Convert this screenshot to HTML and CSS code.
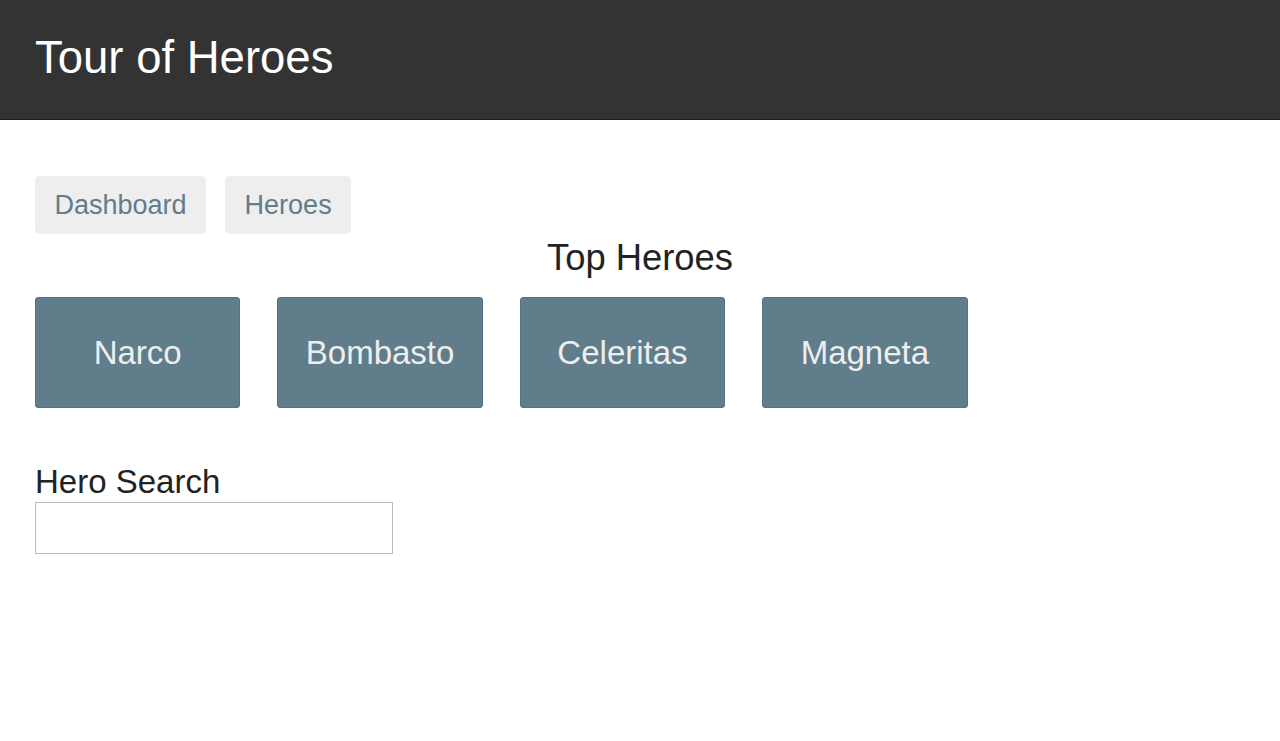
FILE: index.html
```html
<!DOCTYPE html>
<html lang="en">
<head>
<meta charset="utf-8">
<title>Tour of Heroes</title>
<link rel="stylesheet" href="styles.css">
</head>
<body>
<header class="app-header">
  <h1 class="app-title">Tour of Heroes</h1>
</header>
<main class="content">
  <nav class="nav">
    <a class="nav-link" href="#">Dashboard</a>
    <a class="nav-link" href="#">Heroes</a>
  </nav>
  <h2 class="section-title">Top Heroes</h2>
  <div class="hero-grid">
    <a class="hero-card" href="#">Narco</a>
    <a class="hero-card" href="#">Bombasto</a>
    <a class="hero-card" href="#">Celeritas</a>
    <a class="hero-card" href="#">Magneta</a>
  </div>
  <section class="search">
    <h4 class="search-title">Hero Search</h4>
    <input class="search-box" type="text">
  </section>
</main>
</body>
</html>
```
FILE: styles.css
```css
* { box-sizing: border-box; }
html, body {
  margin: 0;
  padding: 0;
  background: #fff;
  font-family: "Liberation Sans", Arial, Helvetica, sans-serif;
}
.app-header {
  height: 120px;
  background: #333333;
  border-bottom: 1px solid #1c1c1c;
  padding: 35px 35px 0;
}
.app-title {
  margin: 0;
  color: #ffffff;
  font-size: 45.5px;
  line-height: 45px;
  font-weight: normal;
}
.content {
  display: flex;
  flex-direction: column;
  padding: 56px 35px 0;
}
.nav {
  display: flex;
  gap: 19px;
}
.nav-link {
  display: block;
  background: #eeeeee;
  color: #607d8b;
  text-decoration: none;
  font-size: 27px;
  line-height: 28px;
  padding: 15px 19.5px;
  border-radius: 5px;
}
.section-title {
  margin: 6px 0 0;
  text-align: center;
  font-size: 36.4px;
  line-height: 36px;
  font-weight: normal;
  color: #222;
}
.hero-grid {
  display: flex;
  gap: 37px;
  margin-top: 21px;
}
.hero-card {
  width: 205.4px;
  height: 111px;
  display: flex;
  align-items: center;
  justify-content: center;
  background: #607d8b;
  border: 1px solid #567382;
  border-radius: 3px;
  color: #eeeeee;
  text-decoration: none;
  font-size: 33px;
  line-height: 33px;
}
.search {
  display: flex;
  flex-direction: column;
  align-items: flex-start;
  margin-top: 57px;
}
.search-title {
  margin: 0;
  font-size: 33px;
  line-height: 33px;
  font-weight: normal;
  color: #222;
}
.search-box {
  margin-top: 4px;
  width: 358px;
  height: 52px;
  border: 1px solid #bdbdbd;
  border-radius: 0;
  padding: 0 8px;
  font-size: 20px;
  font-family: inherit;
  outline: none;
}
```
